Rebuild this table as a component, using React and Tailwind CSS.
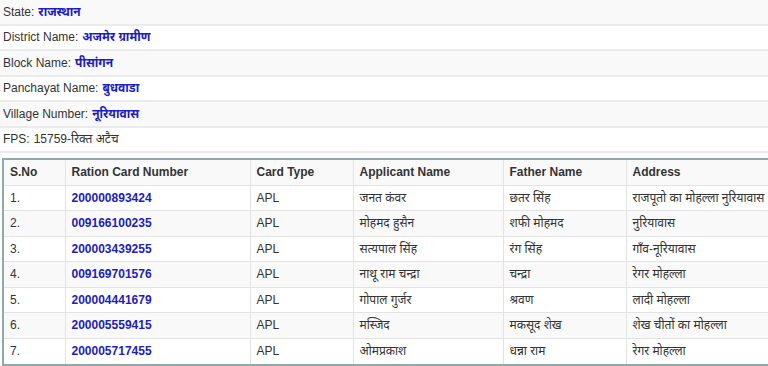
const info = [
  ["State:", "राजस्थान", true],
  ["District Name:", "अजमेर  ग्रामीण", true],
  ["Block Name:", "पीसांगन", true],
  ["Panchayat Name:", "बुधवाडा", true],
  ["Village Number:", "नूरियावास", true],
  ["FPS:", "15759-रिक्त अटैच", false],
];

const rows = [
  ["1.", "200000893424", "APL", "जनत कंवर", "छतर सिंह", "राजपूतो का मोहल्ला नुरियावास"],
  ["2.", "009166100235", "APL", "मोहमद हुसैन", "शफी मोहमद", "नुरियावास"],
  ["3.", "200003439255", "APL", "सत्यपाल सिंह", "रंग सिंह", "गाँव-नूरियावास"],
  ["4.", "009169701576", "APL", "नाथू राम चन्द्रा", "चन्द्रा", "रेगर मोहल्ला"],
  ["5.", "200004441679", "APL", "गोपाल गुर्जर", "श्रवण", "लादी मोहल्ला"],
  ["6.", "200005559415", "APL", "मस्जिद", "मकसूद शेख", "शेख चीतों का मोहल्ला"],
  ["7.", "200005717455", "APL", "ओमप्रकाश", "धन्ना राम", "रेगर मोहल्ला"],
];

const cols = ["w-[61px]", "w-[185px]", "w-[103px]", "w-[150px]", "w-[123px]", "w-[200px]"];
const heads = ["S.No", "Ration Card Number", "Card Type", "Applicant Name", "Father Name", "Address"];

export default function App() {
  return (
    <div className="w-[768px] h-[366px] overflow-hidden bg-white text-[12px] text-[#333] font-['Liberation_Sans','Noto_Sans',sans-serif]">
      {info.map(([label, value, bold], i) => (
        <div
          key={label}
          className={`h-[25.5px] flex items-center px-[3px] border-b-2 border-[#ebebeb] ${i % 2 === 0 ? "bg-[#f9f9f9]" : "bg-white"}`}
        >
          <span>{label}</span>
          <span className={bold ? "ml-1 font-bold text-[#1c1cc4]" : "ml-1"}>{value}</span>
        </div>
      ))}
      <div className="pt-[5px] pl-[2px]">
        <div className="w-[800px] border-2 border-r-0 border-[#8eaaa9]">
          <table className="border-collapse table-fixed w-[798px]">
            <tbody>
              <tr className="bg-[#f9f9f9] h-[25px]">
                {heads.map((h, i) => (
                  <td key={h} className={`${cols[i]} px-[6px] font-bold border border-[#e3e3e3] border-t-0 ${i === 0 ? "border-l-0" : ""}`}>
                    {h}
                  </td>
                ))}
              </tr>
              {rows.map((r, ri) => (
                <tr key={r[0]} className={`h-[25.5px] ${ri % 2 === 1 ? "bg-[#f9f9f9]" : "bg-white"}`}>
                  {r.map((c, ci) => (
                    <td
                      key={ci}
                      className={`px-[6px] border border-[#e3e3e3] ${ci === 0 ? "border-l-0" : ""} ${ri === rows.length - 1 ? "border-b-0" : ""} ${ci === 1 ? "font-bold text-[#1c1cc4]" : ""}`}
                    >
                      {c}
                    </td>
                  ))}
                </tr>
              ))}
            </tbody>
          </table>
        </div>
      </div>
    </div>
  );
}
